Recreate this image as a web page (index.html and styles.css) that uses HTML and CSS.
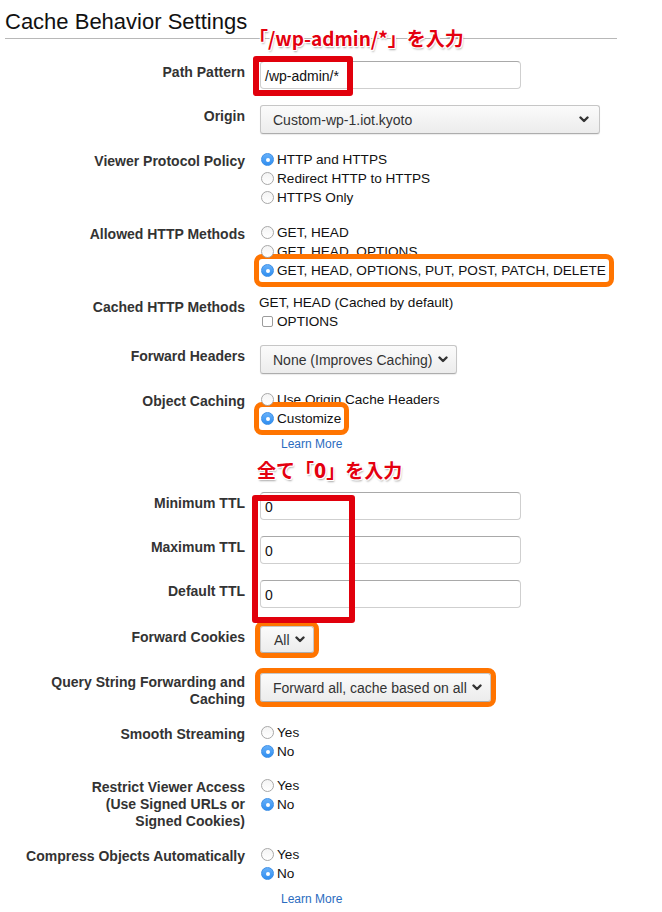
FILE: index.html
```html
<!DOCTYPE HTML>
<html>
<head>
<meta charset="utf-8">
<title>Cache Behavior Settings</title>
<link rel="stylesheet" href="styles.css">
</head>
<body>
<div class="page">
  <h1 class="title">Cache Behavior Settings</h1>
  <div class="rule"></div>
  <div class="note note-path">「/wp-admin/*」を入力</div>

  <div class="row mark-host">
    <div class="label">Path Pattern</div>
    <div class="textbox">/wp-admin/*</div>
    <div class="red-box path-box"></div>
  </div>

  <div class="row">
    <div class="label">Origin</div>
    <div class="select wide"><span>Custom-wp-1.iot.kyoto</span><svg class="chev" width="10" height="7" viewBox="0 0 10 7"><polyline points="1.5,1.5 5,5 8.5,1.5" /></svg></div>
  </div>

  <div class="row">
    <div class="label">Viewer Protocol Policy</div>
    <div class="choices">
      <div class="opt"><span class="radio on"></span>HTTP and HTTPS</div>
      <div class="opt"><span class="radio"></span>Redirect HTTP to HTTPS</div>
      <div class="opt"><span class="radio"></span>HTTPS Only</div>
    </div>
  </div>

  <div class="row">
    <div class="label">Allowed HTTP Methods</div>
    <div class="choices">
      <div class="opt"><span class="radio"></span>GET, HEAD</div>
      <div class="opt"><span class="radio"></span>GET, HEAD, OPTIONS</div>
      <div class="opt"><span class="opt-mark"><span class="radio on"></span>GET, HEAD, OPTIONS, PUT, POST, PATCH, DELETE</span></div>
    </div>
  </div>

  <div class="row gap-13">
    <div class="label low">Cached HTTP Methods</div>
    <div class="choices plain">
      <div class="opt">GET, HEAD (Cached by default)</div>
      <div class="opt"><span class="check"></span>OPTIONS</div>
    </div>
  </div>

  <div class="row gap-14">
    <div class="label">Forward Headers</div>
    <div class="select"><span>None (Improves Caching)</span><svg class="chev" width="10" height="7" viewBox="0 0 10 7"><polyline points="1.5,1.5 5,5 8.5,1.5" /></svg></div>
  </div>

  <div class="row">
    <div class="label">Object Caching</div>
    <div class="choices">
      <div class="opt"><span class="radio"></span>Use Origin Cache Headers</div>
      <div class="opt"><span class="opt-mark"><span class="radio on"></span>Customize</span></div>
    </div>
  </div>
  <a class="learn" href="#">Learn More</a>

  <div class="note note-ttl">全て「<b>0</b>」を入力</div>

  <div class="ttl-group">
    <div class="row first">
      <div class="label">Minimum TTL</div>
      <div class="textbox">0</div>
    </div>
    <div class="row">
      <div class="label">Maximum TTL</div>
      <div class="textbox">0</div>
    </div>
    <div class="row">
      <div class="label">Default TTL</div>
      <div class="textbox">0</div>
    </div>
    <div class="red-box ttl-box"></div>
  </div>

  <div class="row gap-18">
    <div class="label">Forward Cookies</div>
    <div class="select short marked"><span>All</span><svg class="chev" width="10" height="7" viewBox="0 0 10 7"><polyline points="1.5,1.5 5,5 8.5,1.5" /></svg></div>
  </div>

  <div class="row gap-20">
    <div class="label high">Query String Forwarding and<br>Caching</div>
    <div class="select marked"><span>Forward all, cache based on all</span><svg class="chev" width="10" height="7" viewBox="0 0 10 7"><polyline points="1.5,1.5 5,5 8.5,1.5" /></svg></div>
  </div>

  <div class="row gap-15">
    <div class="label">Smooth Streaming</div>
    <div class="choices">
      <div class="opt"><span class="radio"></span>Yes</div>
      <div class="opt"><span class="radio on"></span>No</div>
    </div>
  </div>

  <div class="row gap-15">
    <div class="label">Restrict Viewer Access<br>(Use Signed URLs or<br>Signed Cookies)</div>
    <div class="choices">
      <div class="opt"><span class="radio"></span>Yes</div>
      <div class="opt"><span class="radio on"></span>No</div>
    </div>
  </div>

  <div class="row gap-15">
    <div class="label">Compress Objects Automatically</div>
    <div class="choices">
      <div class="opt"><span class="radio"></span>Yes</div>
      <div class="opt"><span class="radio on"></span>No</div>
    </div>
  </div>
  <a class="learn" href="#">Learn More</a>
</div>
</body>
</html>
```

FILE: styles.css
```css
body {
  margin: 0;
  background: #fff;
  font-family: "Liberation Sans", Arial, sans-serif;
  font-size: 14px;
  color: #111;
}

.page {
  position: relative;
  width: 662px;
  height: 912px;
  overflow: hidden;
}

.title {
  margin: 0 0 0 5px;
  padding-top: 9px;
  font-size: 22px;
  font-weight: normal;
  line-height: 26px;
  color: #111;
}

.rule {
  margin: 3px 0 0 5px;
  width: 612px;
  height: 1px;
  background: #b8b8b8;
}

/* red notes drawn over the form */
.note {
  color: #e4000f;
  font-family: "Noto Sans CJK JP", sans-serif;
  font-weight: 700;
  line-height: 24px;
  text-shadow: 1px 0 0 #fff, -1px 0 0 #fff, 0 1px 0 #fff, 0 -1px 0 #fff,
    1px 1px 0 #fff, -1px -1px 0 #fff, 1px -1px 0 #fff, -1px 1px 0 #fff,
    1px 2px 2px rgba(0,0,0,0.35);
}

.note-path {
  position: absolute;
  left: 249px;
  top: 26px;
  font-size: 19px;
}

.note-ttl {
  margin: 6px 0 0 257px;
  font-size: 19px;
}

.note-ttl b {
  font-size: 20px;
}

.row {
  display: flex;
  gap: 15px;
  margin-top: 16px;
}

.row.mark-host {
  position: relative;
  margin-top: 22px;
}

.gap-13 { margin-top: 13px; }
.gap-14 { margin-top: 14px; }
.gap-15 { margin-top: 15px; }
.gap-18 { margin-top: 18px; }
.gap-20 { margin-top: 20px; }

.label {
  flex: none;
  width: 245px;
  padding-top: 3px;
  text-align: right;
  font-weight: bold;
  line-height: 17px;
  color: #333;
}

.label.low {
  padding-top: 6px;
}

.label.high {
  padding-top: 1px;
}

.textbox {
  box-sizing: border-box;
  width: 261px;
  height: 28px;
  padding: 6px 0 0 4px;
  line-height: 16px;
  border: 1px solid #cfcfcf;
  border-top-color: #a9a9a9;
  border-radius: 4px;
  color: #111;
}

.select {
  box-sizing: border-box;
  display: flex;
  align-items: center;
  gap: 5px;
  height: 29px;
  padding: 0 8px 0 12px;
  border: 1px solid #c6c6c6;
  border-bottom-color: #adadad;
  border-radius: 3px;
  background: linear-gradient(to bottom, #fbfbfb 0%, #ececec 100%);
  box-shadow: 0 1px 1px rgba(0,0,0,0.08);
  color: #333;
}

.select.wide {
  width: 340px;
  justify-content: space-between;
  padding-right: 10px;
}

.select.short {
  height: 27px;
  padding-left: 13px;
}

.select.marked {
  outline: 5px solid #ff7400;
  outline-offset: 0;
}

.chev {
  fill: none;
  stroke: #333;
  stroke-width: 2.4;
  stroke-linecap: round;
  stroke-linejoin: round;
}

.choices {
  padding-left: 1px;
  font-size: 13.6px;
}

.choices.plain {
  padding-left: 0;
  margin-left: -1px;
}

.opt {
  display: flex;
  align-items: center;
  height: 19px;
  line-height: 19px;
  white-space: nowrap;
}

.opt-mark {
  display: inline-flex;
  align-items: center;
  height: 19px;
  padding-right: 1px;
  background: #fff;
  border-radius: 1px;
  outline: 5px solid #ff7400;
  outline-offset: 2px;
}

.radio {
  box-sizing: border-box;
  position: relative;
  flex: none;
  width: 13px;
  height: 13px;
  margin-right: 3px;
  border: 1px solid #a8a8a8;
  border-radius: 50%;
  background: linear-gradient(to bottom, #f4f4f4, #fff);
}

.radio.on {
  border-color: #3d8fe6;
  background: linear-gradient(to bottom, #66b0fa, #2f8ef0);
}

.radio.on::after {
  content: "";
  position: absolute;
  left: 3.5px;
  top: 3.5px;
  width: 4px;
  height: 4px;
  border-radius: 50%;
  background: #fff;
}

.check {
  box-sizing: border-box;
  flex: none;
  width: 11px;
  height: 11px;
  margin: 0 4px 0 3px;
  border: 1px solid #9c9c9c;
  border-radius: 2px;
  background: #fff;
}

.learn {
  display: block;
  margin: 8px 0 0 281px;
  width: 70px;
  font-size: 12px;
  line-height: 16px;
  color: #2b6cc0;
  text-decoration: none;
}

.red-box {
  position: absolute;
  box-sizing: border-box;
  border: 6px solid #e1000c;
  border-radius: 3px;
}

.path-box {
  left: 253px;
  top: -5px;
  width: 100px;
  height: 40px;
}

.ttl-group {
  position: relative;
}

.ttl-group .row.first {
  margin-top: 10px;
}

.ttl-box {
  left: 252px;
  top: 3px;
  width: 103px;
  height: 128px;
}
```
